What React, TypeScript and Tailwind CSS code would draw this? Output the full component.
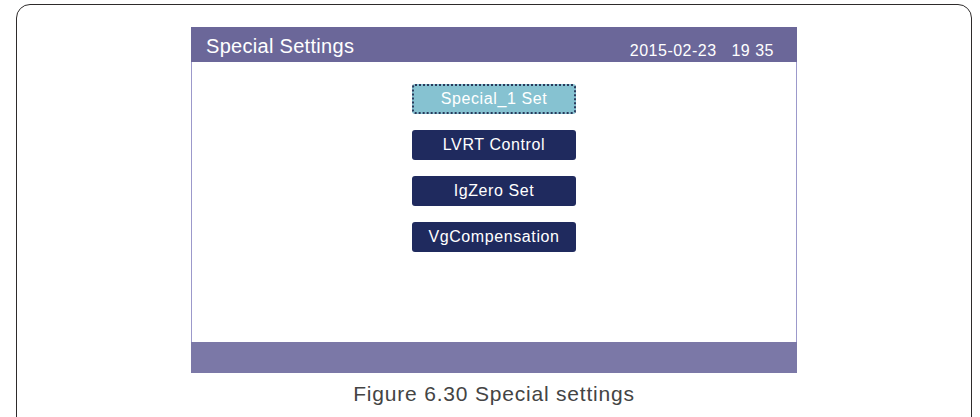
const buttons = [
  { label: 'Special_1 Set', active: true },
  { label: 'LVRT Control', active: false },
  { label: 'IgZero Set', active: false },
  { label: 'VgCompensation', active: false },
];

export default function App() {
  return (
    <div className="h-[417px] w-[980px] overflow-hidden bg-white font-['Liberation_Sans',Arial,sans-serif]">
      <div className="ml-[16px] mt-[4px] flex h-[430px] w-[956px] flex-col items-center rounded-[14px] border-[1.5px] border-[#2e2b2b] pt-[21.5px]">
        <div className="w-[606px]">
          <div className="flex h-[35px] items-center justify-between bg-[#6b6799] pl-[15px] pr-[23px] text-white">
            <span className="mt-[3px] text-[20px] tracking-[0.3px]">Special Settings</span>
            <span className="mt-[13px] text-[16px] tracking-[0.5px]">
              2015-02-23&nbsp;&nbsp;&nbsp;19 35
            </span>
          </div>
          <div className="flex h-[280px] flex-col items-center gap-[16px] border-x-[1.5px] border-[#9c99cb] bg-white pt-[22px]">
            {buttons.map((b) => (
              <div
                key={b.label}
                className={
                  b.active
                    ? 'flex h-[30px] w-[164px] items-center justify-center rounded-[3px] border-2 border-dotted border-[#2a3a5c] bg-[#86c2d1] text-[16px] tracking-[0.6px] text-white'
                    : 'flex h-[30px] w-[164px] items-center justify-center rounded-[3px] bg-[#1f2a5e] text-[16px] tracking-[0.6px] text-white'
                }
              >
                {b.label}
              </div>
            ))}
          </div>
          <div className="h-[31px] bg-[#7b78a7]" />
        </div>
        <div className="mt-[5px] text-[21px] tracking-[0.8px] text-[#444]">Figure 6.30 Special settings</div>
      </div>
    </div>
  );
}
